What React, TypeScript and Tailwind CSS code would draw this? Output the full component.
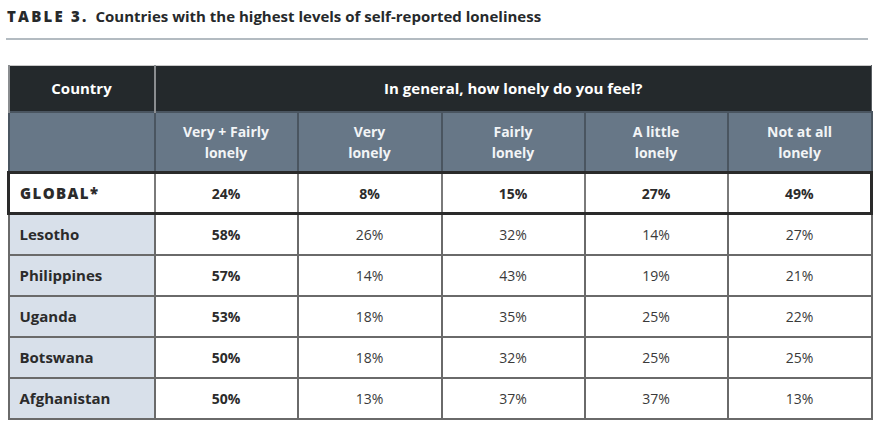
import React from "react";

const rows = [
  { c: "Lesotho", v: ["58%", "26%", "32%", "14%", "27%"] },
  { c: "Philippines", v: ["57%", "14%", "43%", "19%", "21%"] },
  { c: "Uganda", v: ["53%", "18%", "35%", "25%", "22%"] },
  { c: "Botswana", v: ["50%", "18%", "32%", "25%", "25%"] },
  { c: "Afghanistan", v: ["50%", "13%", "37%", "37%", "13%"] },
];

const subs = [
  ["Very + Fairly", "lonely"],
  ["Very", "lonely"],
  ["Fairly", "lonely"],
  ["A little", "lonely"],
  ["Not at all", "lonely"],
];

const global = ["24%", "8%", "15%", "27%", "49%"];

export default function App() {
  return (
    <div
      className="w-[880px] h-[427px] bg-white overflow-hidden text-[#2b2b2b]"
      style={{ fontFamily: '"Open Sans", "Liberation Sans", sans-serif' }}
    >
      <div className="pl-[7px] pt-[4px] h-[28px] flex items-center gap-[7px] text-[15px] font-bold leading-none text-[#26292b]">
        <span className="tracking-[2.2px] font-extrabold">TABLE 3.</span>
        <span>Countries with the highest levels of self-reported loneliness</span>
      </div>
      <div className="ml-[6px] mt-[10px] w-[862px] h-[2px] bg-[#b3bbc1]" />
      <div className="ml-[7px] mt-[25px] w-[863px]">
        <table className="table-fixed border-collapse w-[863px]">
          <colgroup>
            <col className="w-[146px]" />
            <col className="w-[143px]" />
            <col className="w-[144px]" />
            <col className="w-[143px]" />
            <col className="w-[143px]" />
            <col className="w-[144px]" />
          </colgroup>
          <thead>
            <tr className="h-[46px] bg-[#24292c] text-white text-[15px] font-bold">
              <th className="border-t border-t-[#c8c8c8] border-l-2 border-l-[#8a8d90] border-r-2 border-r-[#8a8d90] text-center">
                Country
              </th>
              <th colSpan={5} className="border-t border-t-[#c8c8c8] border-r border-r-[#5a5f63] text-center">
                In general, how lonely do you feel?
              </th>
            </tr>
            <tr className="h-[61px] bg-[#677787] text-[#f2f4f6] text-[14px] font-semibold leading-[21px]">
              <th className="border-2 border-[#4a5560]" />
              {subs.map((s, i) => (
                <th key={i} className="border-2 border-[#4a5560] text-center">
                  {s[0]}
                  <br />
                  {s[1]}
                </th>
              ))}
            </tr>
          </thead>
          <tbody>
            <tr className="h-[41px] bg-white">
              <td className="border-[3px] border-r-2 border-[#2a2a2a] border-r-[#7a7a7a] pl-[10px] text-[15px] font-extrabold tracking-[1.4px] text-[#2b2b2b]">
                GLOBAL*
              </td>
              {global.map((g, i) => (
                <td
                  key={i}
                  className={`border-y-[3px] border-y-[#2a2a2a] text-center text-[14px] font-bold text-[#2b2b2b] ${
                    i === 4 ? "border-r-[3px] border-r-[#2a2a2a]" : "border-r-2 border-r-[#7a7a7a]"
                  }`}
                >
                  {g}
                </td>
              ))}
            </tr>
            {rows.map((r) => (
              <tr key={r.c} className="h-[41px]">
                <td className="border-2 border-[#6a6a6a] bg-[#d8e0ea] pl-[10px] text-[15px] font-bold text-[#2b2b2b]">
                  {r.c}
                </td>
                {r.v.map((v, i) => (
                  <td
                    key={i}
                    className={`border-2 border-[#6a6a6a] bg-white text-center text-[14px] ${
                      i === 0 ? "font-bold text-[#2b2b2b]" : "font-normal text-[#3a3a3a]"
                    }`}
                  >
                    {v}
                  </td>
                ))}
              </tr>
            ))}
          </tbody>
        </table>
      </div>
    </div>
  );
}
